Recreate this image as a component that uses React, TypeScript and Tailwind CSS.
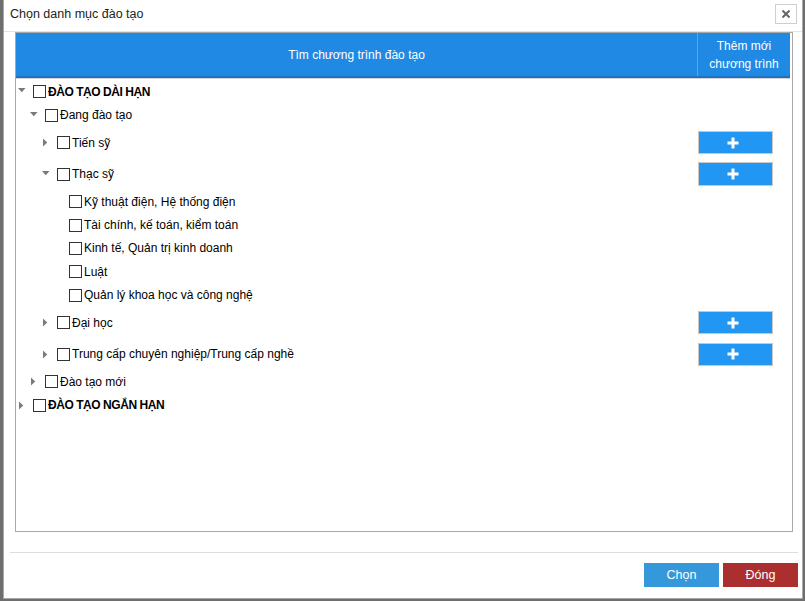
import React from "react";

type Node = {
  label: string;
  level: number;
  toggle: "down" | "right" | "none";
  bold?: boolean;
  button?: boolean;
};

const nodes: Node[] = [
  { label: "ĐÀO TẠO DÀI HẠN", level: 0, toggle: "down", bold: true },
  { label: "Đang đào tạo", level: 1, toggle: "down" },
  { label: "Tiến sỹ", level: 2, toggle: "right", button: true },
  { label: "Thạc sỹ", level: 2, toggle: "down", button: true },
  { label: "Kỹ thuật điện, Hệ thống điện", level: 3, toggle: "none" },
  { label: "Tài chính, kế toán, kiểm toán", level: 3, toggle: "none" },
  { label: "Kinh tế, Quản trị kinh doanh", level: 3, toggle: "none" },
  { label: "Luật", level: 3, toggle: "none" },
  { label: "Quản lý khoa học và công nghệ", level: 3, toggle: "none" },
  { label: "Đại học", level: 2, toggle: "right", button: true },
  { label: "Trung cấp chuyên nghiệp/Trung cấp nghề", level: 2, toggle: "right", button: true },
  { label: "Đào tạo mới", level: 1, toggle: "right" },
  { label: "ĐÀO TẠO NGẮN HẠN", level: 0, toggle: "right", bold: true },
];

const padByLevel = ["pl-[2px]", "pl-[14px]", "pl-[26px]", "pl-[38px]"];

function Toggle({ kind }: { kind: Node["toggle"] }) {
  return (
    <span className="w-[15px] h-[13px] flex items-center shrink-0">
      {kind === "down" && (
        <svg width="8" height="5" viewBox="0 0 8 5" className="-mt-[2px]">
          <polygon points="0,0 7.5,0 3.75,4.2" fill="#7a7a7a" />
        </svg>
      )}
      {kind === "right" && (
        <svg width="6" height="9" viewBox="0 0 6 9" className="ml-[1px]">
          <polygon points="0,0.5 4.2,4.5 0,8.5" fill="#7a7a7a" />
        </svg>
      )}
    </span>
  );
}

function PlusButton() {
  return (
    <div className="ml-[1px] w-[75px] h-[23.4px] bg-[#2196f3] border border-[#c8c8c8] flex items-center justify-center pr-[5px]">
      <svg width="12" height="12" viewBox="0 0 12 12">
        <rect x="0.5" y="4.5" width="11" height="3" fill="#ffffff" />
        <rect x="4.5" y="0.5" width="3" height="11" fill="#ffffff" />
      </svg>
    </div>
  );
}

function Row({ node }: { node: Node }) {
  return (
    <div
      className={`flex items-center ${node.button ? "h-[31.6px]" : "h-[23.4px]"}`}
    >
      <div className={`flex-1 flex items-center ${padByLevel[node.level]}`}>
        <Toggle kind={node.toggle} />
        <span className="w-[13px] h-[13px] border border-[#333] bg-white shrink-0" />
        <span
          className={`ml-[2px] text-[12px] leading-[14px] text-black whitespace-nowrap ${
            node.bold ? "font-bold tracking-[-0.45px]" : ""
          }`}
        >
          {node.label}
        </span>
      </div>
      <div className="w-[93px] shrink-0 flex items-center">
        {node.button && <PlusButton />}
      </div>
    </div>
  );
}

export default function App() {
  return (
    <div
      className="w-[805px] h-[601px] bg-[#6e6e6e] overflow-hidden pl-[3px]"
      style={{ fontFamily: '"Liberation Sans", Arial, sans-serif' }}
    >
      <div className="w-[800px] h-[600px] -mt-px bg-white border border-[#a8a8a8] flex flex-col">
        {/* Title bar */}
        <div className="h-[32px] border-b border-[#e3e3e3] flex items-center justify-between pl-[6px] pr-[5px] shrink-0">
          <span className="text-[12.5px] text-[#222] -mt-[2px]">Chọn danh mục đào tạo</span>
          <button className="w-[22px] h-[20px] border border-[#cfcfcf] bg-white flex items-center justify-center -mt-[3px]">
            <svg width="8" height="8" viewBox="0 0 8 8">
              <path d="M1.2 1.2 L6.8 6.8 M6.8 1.2 L1.2 6.8" stroke="#666" strokeWidth="2" strokeLinecap="square" />
            </svg>
          </button>
        </div>

        {/* Body */}
        <div className="pl-[11px] pr-[9px] shrink-0">
          <div className="h-[500px] border border-[#a9a9a9] bg-white flex flex-col">
            <div className="mr-[2px] border-b border-[#d4d4d4]">
              <div className="h-[45px] bg-[#2089e3] border-b-2 border-[#1b72c6] flex text-white text-[12px]">
                <div className="flex-1 flex items-center justify-center">Tìm chương trình đào tạo</div>
                <div className="w-[93px] border-l border-[#5aa8ec] flex flex-col items-center justify-center leading-[18px]">
                  <span>Thêm mới</span>
                  <span>chương trình</span>
                </div>
              </div>
            </div>
            <div className="pt-[1px] mr-[2px]">
              {nodes.map((n, i) => (
                <Row key={i} node={n} />
              ))}
            </div>
          </div>
        </div>

        {/* Footer */}
        <div className="mt-[20px] ml-[6px] mr-[4px] border-t border-[#dedede] pt-[10px] flex justify-end gap-[4px]">
          <button className="w-[75px] h-[24px] bg-[#3498db] text-white text-[12.5px]">Chọn</button>
          <button className="w-[75px] h-[24px] bg-[#ab2f2f] text-white text-[12.5px]">Đóng</button>
        </div>
      </div>
    </div>
  );
}
